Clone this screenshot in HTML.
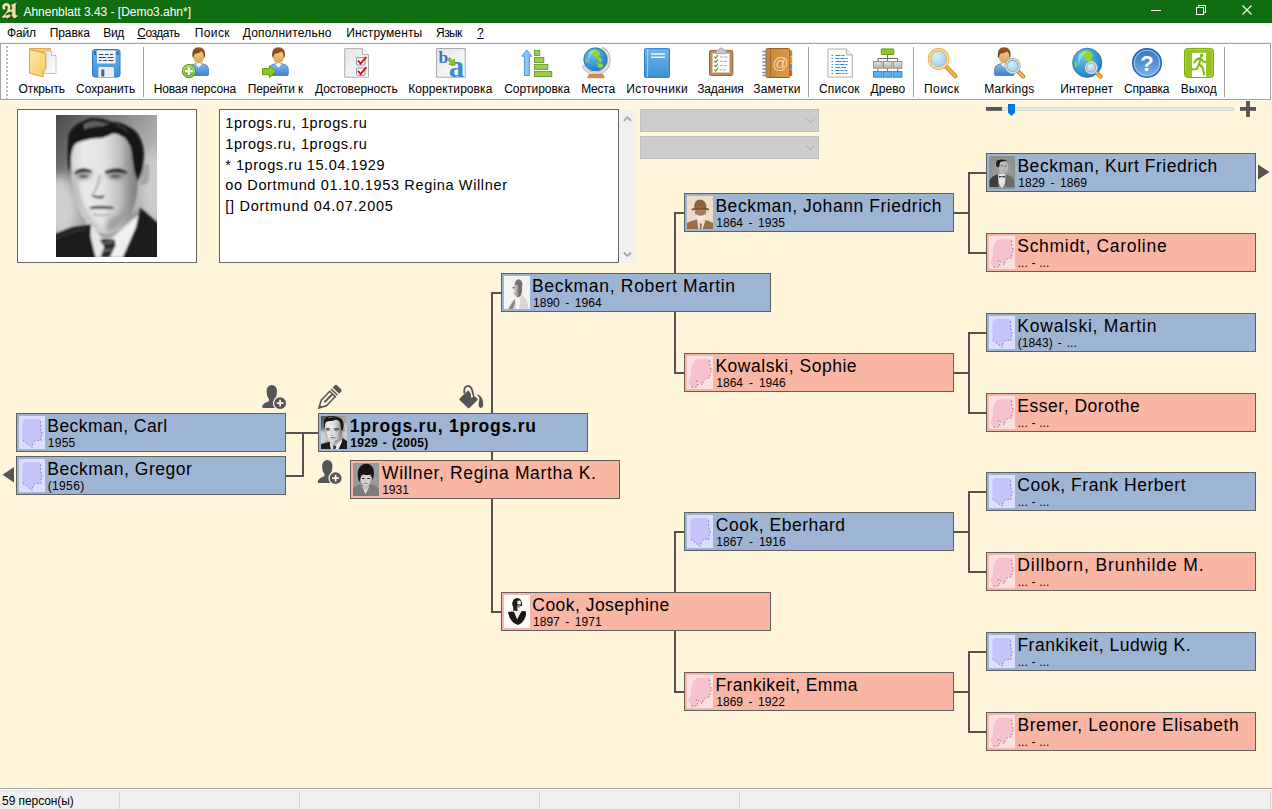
<!DOCTYPE html><html><head><meta charset="utf-8"><title>Ahnenblatt 3.43 - [Demo3.ahn*]</title><style>
html,body{margin:0;padding:0}
body{width:1272px;height:809px;overflow:hidden;background:#FFF5DA;position:relative;font-family:"Liberation Sans",sans-serif;color:#000}
.abs{position:absolute}
span.t{position:absolute;white-space:nowrap;line-height:16px}
#title{position:absolute;left:0;top:0;width:1272px;height:23px;background:#106E10}
#menu{position:absolute;left:0;top:23px;width:1272px;height:20px;background:#fff;border-bottom:1px solid #f2f2f2;box-sizing:border-box}
#tb{position:absolute;left:0;top:43px;width:1269px;height:55px;background:#fff;border:1px solid #a0a0a0}
#tbfill{position:absolute;left:0;top:43px;width:1272px;height:58px;background:#fff}
.sep{position:absolute;top:3px;width:1px;height:50px;background:#a0a0a0}
.box{position:absolute;width:268px;height:37px;border:1px solid #5f5f5f}
.m{background:#9DB5D2}
.f{background:#F9B6A4}
.box .th{position:absolute;left:2px;top:2px;width:26px;height:33px;overflow:hidden}
span.n{position:absolute;white-space:nowrap;line-height:20px}
span.d{position:absolute;white-space:nowrap;line-height:12px}
span.b{font-weight:bold}
#status{position:absolute;left:0;top:788px;width:1272px;height:21px;background:#f0f0f0;border-top:1px solid #a0a0a0;box-sizing:border-box;box-shadow:inset 0 1px 0 #fff,inset 0 2px 0 #dfdfdf}
#status i{position:absolute;top:3px;width:1px;height:17px;background:#d4d4d4}
</style></head><body>
<div id="title"><span class="t" style="left:23.45px;top:4px;font-size:12px;letter-spacing:-0.02px;color:#fff">Ahnenblatt 3.43 - [Demo3.ahn*]</span></div>
<div id="menu"><span class="t" style="left:7.1px;top:2px;font-size:12px;letter-spacing:-0.23px;">Файл</span><span class="t" style="left:49.75px;top:2px;font-size:12px;letter-spacing:-0.09px;">Правка</span><span class="t" style="left:103.3px;top:2px;font-size:12px;letter-spacing:-0.34px;">Вид</span><span class="t" style="left:137.2px;top:2px;font-size:12px;letter-spacing:-0.45px;"><u>С</u>оздать</span><span class="t" style="left:194.75px;top:2px;font-size:12px;letter-spacing:0.39px;">Поиск</span><span class="t" style="left:242.75px;top:2px;font-size:12px;letter-spacing:0.19px;">Дополнительно</span><span class="t" style="left:346.2px;top:2px;font-size:12px;letter-spacing:0.11px;">Инструменты</span><span class="t" style="left:436.1px;top:2px;font-size:12px;letter-spacing:-0.6px;">Язык</span><span class="t" style="left:477.1px;top:2px;font-size:12px;letter-spacing:0px;"><u>?</u></span></div>
<div id="tbfill"></div>
<div id="tb"><span class="t" style="left:17.55px;top:37px;font-size:12px;letter-spacing:-0.11px;">Открыть</span><span class="t" style="left:75.1px;top:37px;font-size:12px;letter-spacing:-0.06px;">Сохранить</span><span class="t" style="left:152.65px;top:37px;font-size:12px;letter-spacing:-0.13px;">Новая персона</span><span class="t" style="left:246.65px;top:37px;font-size:12px;letter-spacing:-0.06px;">Перейти к</span><span class="t" style="left:314px;top:37px;font-size:12px;letter-spacing:-0.07px;">Достоверность</span><span class="t" style="left:407.3px;top:37px;font-size:12px;letter-spacing:0.07px;">Корректировка</span><span class="t" style="left:503.2px;top:37px;font-size:12px;letter-spacing:0px;">Сортировка</span><span class="t" style="left:580.2px;top:37px;font-size:12px;letter-spacing:-0.23px;">Места</span><span class="t" style="left:625.2px;top:37px;font-size:12px;letter-spacing:0.45px;">Источники</span><span class="t" style="left:696.2px;top:37px;font-size:12px;letter-spacing:-0.15px;">Задания</span><span class="t" style="left:752.2px;top:37px;font-size:12px;letter-spacing:0.22px;">Заметки</span><span class="t" style="left:818.1px;top:37px;font-size:12px;letter-spacing:0.09px;">Список</span><span class="t" style="left:869.55px;top:37px;font-size:12px;letter-spacing:0.06px;">Древо</span><span class="t" style="left:923.1px;top:37px;font-size:12px;letter-spacing:0.39px;">Поиск</span><span class="t" style="left:983.3px;top:37px;font-size:12px;letter-spacing:0.19px;">Markings</span><span class="t" style="left:1059.3px;top:37px;font-size:12px;letter-spacing:0.06px;">Интернет</span><span class="t" style="left:1123.1px;top:37px;font-size:12px;letter-spacing:-0.3px;">Справка</span><span class="t" style="left:1179.65px;top:37px;font-size:12px;letter-spacing:0.06px;">Выход</span><div class="sep" style="left:142px"></div><div class="sep" style="left:807px"></div><div class="sep" style="left:912px"></div><div class="sep" style="left:1223px"></div></div>
<svg class="abs" style="left:0;top:0" width="1272" height="100" viewBox="0 0 1272 100">
<defs>
<linearGradient id="gBody" x1="0" y1="0" x2="0" y2="1"><stop offset="0" stop-color="#8cc0ee"/><stop offset="1" stop-color="#3b82cf"/></linearGradient>
<linearGradient id="gFace" x1="0" y1="0" x2="0" y2="1"><stop offset="0" stop-color="#f3d193"/><stop offset="1" stop-color="#d9a25a"/></linearGradient>
<linearGradient id="gHair" x1="0" y1="0" x2="0" y2="1"><stop offset="0" stop-color="#9a5a24"/><stop offset="1" stop-color="#6b3410"/></linearGradient>
<radialGradient id="gGlass" cx="0.4" cy="0.35" r="0.75"><stop offset="0" stop-color="#d8f0fb"/><stop offset="1" stop-color="#8cc8ec"/></radialGradient>
<radialGradient id="gSea" cx="0.35" cy="0.3" r="0.8"><stop offset="0" stop-color="#5fc0f0"/><stop offset="1" stop-color="#1c78c4"/></radialGradient>
<linearGradient id="gFolder" x1="0" y1="0" x2="1" y2="1"><stop offset="0" stop-color="#fce8a2"/><stop offset="1" stop-color="#f6cc62"/></linearGradient>
<linearGradient id="gPaper" x1="0" y1="0" x2="1" y2="1"><stop offset="0" stop-color="#e4e4e4"/><stop offset="1" stop-color="#ffffff"/></linearGradient>
<linearGradient id="gBlue" x1="0" y1="0" x2="0" y2="1"><stop offset="0" stop-color="#6fb4ea"/><stop offset="1" stop-color="#3f8fd6"/></linearGradient>
<linearGradient id="gGreenBtn" x1="0" y1="0" x2="0" y2="1"><stop offset="0" stop-color="#a6d84a"/><stop offset="1" stop-color="#5da016"/></linearGradient>
<linearGradient id="gHelp" x1="0" y1="0" x2="0" y2="1"><stop offset="0" stop-color="#2f74c4"/><stop offset="1" stop-color="#7db4e8"/></linearGradient>
<linearGradient id="gBrown" x1="0" y1="0" x2="1" y2="0"><stop offset="0" stop-color="#c98436"/><stop offset="1" stop-color="#dd9a4c"/></linearGradient>
<linearGradient id="gGrayBox" x1="0" y1="0" x2="0" y2="1"><stop offset="0" stop-color="#e2e2e2"/><stop offset="1" stop-color="#b4b4b4"/></linearGradient>
</defs>
<path d="M7 46V99" stroke="#b9b9b9" stroke-width="2" stroke-dasharray="2 2"/>
<g>
<path d="M29.5 48.5H50.5V52H29.5Z" fill="#f3cf74" stroke="#d9a13a" stroke-width="0.9"/>
<path d="M44 51H51.5L56 55.5V73.5H44Z" fill="url(#gPaper)" stroke="#b9b9b9" stroke-width="0.8"/>
<path d="M51.5 51V55.5H56" fill="#fff" stroke="#b0b0b0" stroke-width="0.8"/>
<path d="M29.5 49.5L45.8 53.3V69L43.2 71.2V76.8L29.5 73.2Z" fill="url(#gFolder)" stroke="#dba23c" stroke-width="1"/>
</g>
<g>
<rect x="92.5" y="49.5" width="27.5" height="27.5" rx="2.5" fill="url(#gBlue)" stroke="#2c7cc4" stroke-width="1"/>
<rect x="94" y="51" width="2" height="4" fill="#2d6fae"/><rect x="116.5" y="51" width="2" height="4" fill="#2d6fae"/>
<rect x="97" y="50.5" width="18.5" height="13" fill="#eef3f8"/>
<path d="M99 54.5h4.5m1.5 0h3.5m1.5 0h3M99 57.5h7m1.5 0h6M99 60.5h2.5m1.5 0h4m1.5 0h5" stroke="#3b4652" stroke-width="1"/>
<path d="M98.3 77V68.5Q98.3 67 99.8 67H112.5Q114 67 114 68.5V77Z" fill="#e9eef4"/>
<rect x="101.3" y="69.5" width="3" height="7" fill="#5b5f64"/>
</g>
<g transform="translate(198.7,47.3)">
<path d="M-9.600 27.300V22Q-9.600 18 -4 16.600L0 15.500L4 16.600Q9.800 18 9.800 22V27.300Q9.800 28.200 8.800 28.200H-8.600Q-9.600 28.200 -9.600 27.300Z" fill="url(#gBody)" stroke="#3a7cc4" stroke-width="0.8"/>
<path d="M-3.2 16.6L0 20.5L3.2 16.6L0 15Z" fill="#f4f8fc"/>
<ellipse cx="0" cy="9" rx="5.6" ry="7" fill="url(#gFace)"/>
<path d="M-6.4 8.5Q-7 0 0 0Q7 0 6.4 8.5Q6 10 5.2 11Q5.4 6 3 4.2Q0 6.2 -3.5 6.4Q-5 7 -5.2 11Q-6 10 -6.4 8.5Z" fill="url(#gHair)"/>
</g>
<circle cx="188.9" cy="71.1" r="6.6" fill="url(#gGreenBtn)" stroke="#4c8a12" stroke-width="1"/>
<circle cx="188.9" cy="71.1" r="5.6" fill="none" stroke="#c4e880" stroke-width="0.7"/>
<path d="M188.9 67.2V75M185 71.1H192.8" stroke="#fff" stroke-width="2.3"/>
<g transform="translate(278.5,47.3)">
<path d="M-9.600 27.300V22Q-9.600 18 -4 16.600L0 15.500L4 16.600Q9.800 18 9.800 22V27.300Q9.800 28.200 8.800 28.200H-8.600Q-9.600 28.200 -9.600 27.300Z" fill="url(#gBody)" stroke="#3a7cc4" stroke-width="0.8"/>
<path d="M-3.2 16.6L0 20.5L3.2 16.6L0 15Z" fill="#f4f8fc"/>
<ellipse cx="0" cy="9" rx="5.6" ry="7" fill="url(#gFace)"/>
<path d="M-6.4 8.5Q-7 0 0 0Q7 0 6.4 8.5Q6 10 5.2 11Q5.4 6 3 4.2Q0 6.2 -3.5 6.4Q-5 7 -5.2 11Q-6 10 -6.4 8.5Z" fill="url(#gHair)"/>
</g>
<path d="M262.5 68.5H269.5V65.8L275.8 71.6L269.5 77.4V74.7H262.5Z" fill="#8cc820" stroke="#5a9610" stroke-width="0.9" stroke-linejoin="round"/>
<g>
<path d="M344.7 48.6H362.5L368.5 54.6V77.2H344.7Z" fill="url(#gPaper)" stroke="#a6a6a6" stroke-width="0.9"/>
<path d="M362.5 48.6V54.6H368.5" fill="#fff" stroke="#a6a6a6" stroke-width="0.9"/>
<rect x="356.6" y="57.6" width="8.4" height="7.4" rx="1" fill="#fff" stroke="#6d7fa8" stroke-width="0.9"/>
<rect x="356.6" y="68" width="8.4" height="7.4" rx="1" fill="#fff" stroke="#6d7fa8" stroke-width="0.9"/>
<path d="M358 60.5L360.6 63.6L366.4 56.8" fill="none" stroke="#d01818" stroke-width="1.9"/>
<path d="M358 70.9L360.6 74L366.4 67.2" fill="none" stroke="#d01818" stroke-width="1.9"/>
</g>
<g>
<rect x="436.6" y="48.6" width="28.6" height="28.6" fill="url(#gPaper)" stroke="#a0a0a0" stroke-width="0.9"/>
<text x="438.6" y="63.2" font-family="Liberation Serif,serif" font-weight="bold" font-size="17.5" fill="#3a78bf">b</text>
<text x="448.8" y="76.6" font-family="Liberation Serif,serif" font-weight="bold" font-size="31" fill="#3b8ad3">a</text>
<path d="M447.6 59.4L449.6 57.400L452.8 60.600L454.400 59L455.200 65.200L449 64.400L450.600 62.800Z" fill="#8cc820" stroke="#5a9610" stroke-width="0.7" stroke-linejoin="round"/>
</g>
<g>
<path d="M524.4 75.5V56.2H521.9L526.8 49.9L531.7 56.2H529.3V75.5Z" fill="#8ec3f0" stroke="#3f8fd6" stroke-width="0.9" stroke-linejoin="round"/>
<g fill="#9ccc50" stroke="#5c9a26" stroke-width="0.9"><rect x="534.4" y="50.4" width="5.4" height="5"/><rect x="534.4" y="57.4" width="9.4" height="5"/><rect x="534.4" y="64.4" width="13.4" height="5"/><rect x="534.4" y="71.6" width="17.4" height="5"/></g>
</g>
<path d="M603.2 48.9A13.5 13.5 0 1 1 583.8 66.75" fill="none" stroke="#a8a8a8" stroke-width="3.2" stroke-linecap="round"/>
<path d="M603.2 48.9A13.5 13.5 0 1 1 583.8 66.75" fill="none" stroke="#e4e4e4" stroke-width="1.8" stroke-linecap="round"/>
<circle cx="595.4" cy="59.4" r="11.6" fill="url(#gSea)" stroke="#1f6fb0" stroke-width="0.8"/>
<g transform="translate(595.4,59.4) scale(0.9666666666666667)">
<path d="M-4 -9.5Q0 -11 3 -9L5 -6L3.5 -3L6 -1L7.5 2L5 3.5L3 2L1.5 -1L-1 -2L-3 -5L-6 -6Z" fill="#8fd43a"/>
<path d="M1 3L5 4.5L7.5 4L8 7L5 9.5L2.5 8L2 5.5Z" fill="#8fd43a"/>
<path d="M-10.5 0L-8.5 -1L-8 2L-9.5 4Z" fill="#8fd43a"/>
<path d="M-6.5 -7.5Q-3 -10 1 -10Q-3 -8 -5 -4Q-7 -1 -6.5 3Q-8.5 -2 -6.5 -7.5Z" fill="#fff" opacity="0.35"/>
</g>
<path d="M592.5 71.5H599L600 74.6H591.5Z" fill="#d8d8d8"/><path d="M589 74.4H603L604.3 77.8H587.7Z" fill="#d88858" stroke="#b86838" stroke-width="0.6"/>
<g>
<rect x="644.5" y="48.6" width="25" height="28.8" rx="1" fill="url(#gBlue)" stroke="#2f7fc6" stroke-width="1"/>
<path d="M647.6 49V77" stroke="#9fd0f6" stroke-width="1"/>
<path d="M651 53.9H665M651 57.2H665" stroke="#eaf4fc" stroke-width="1.5"/>
</g>
<g>
<rect x="709.5" y="50.4" width="23.3" height="25" rx="1.5" fill="#c08a58" stroke="#96643a" stroke-width="1"/>
<rect x="712.6" y="53.2" width="17" height="19.4" fill="#fbfbfb" stroke="#d8c8b0" stroke-width="0.5"/>
<path d="M716 53.6V51Q716 50 717.5 50H719Q719.3 47.9 721.2 47.9Q723.1 47.9 723.4 50H725Q726.4 50 726.4 51V53.6Z" fill="#c4c8cc" stroke="#8c9096" stroke-width="0.7"/>
<g fill="none" stroke="#4aa018" stroke-width="1.1"><path d="M714.4 56.6l1.3 1.5 2.2-3"/><path d="M714.4 60.9l1.3 1.5 2.2-3"/><path d="M714.4 65.2l1.3 1.5 2.2-3"/><path d="M714.4 69.5l1.3 1.5 2.2-3"/></g>
<path d="M720 57h3.5m1 0h3M720 61.3h2.5m1 0h3.5M720 65.6h3m1 0h2.5M720 69.9h2m1 0h3" stroke="#a0a0a0" stroke-width="0.9"/>
</g>
<g>
<rect x="789" y="50.5" width="3.2" height="6" fill="#7cb342"/><rect x="789" y="57" width="3.2" height="6" fill="#f0a030"/><rect x="789" y="63.5" width="3.2" height="6" fill="#5a9be0"/><rect x="789" y="70" width="3.2" height="6" fill="#e0603a"/>
<rect x="766" y="48.5" width="23.8" height="29" rx="1.5" fill="url(#gBrown)" stroke="#9a5f1e" stroke-width="1"/>
<path d="M770.6 49V77" stroke="#a4661f" stroke-width="1"/>
<path d="M762.8 51.5h5.4M762.8 55h5.4M762.8 58.5h5.4M762.8 62h5.4M762.8 65.500h5.4M762.8 69h5.4M762.8 72.500h5.4M762.8 75.5h5.4" stroke="#8a8a8a" stroke-width="1.3" stroke-linecap="round"/>
<text x="780.3" y="68.8" text-anchor="middle" font-family="Liberation Sans,sans-serif" font-size="16" fill="#f6d9ae">@</text>
</g>
<g>
<path d="M827.9 49H846.4L852.3 54.9V77.1H827.9Z" fill="#fbfbfb" stroke="#a8a8a8" stroke-width="0.9"/>
<path d="M846.4 49V54.900H852.3" fill="#eee" stroke="#a8a8a8" stroke-width="0.9"/>
<g stroke="#2f86d6" stroke-width="1.1"><path d="M831.5 55.5h1.5m2.500 0h5m1 0h3"/><path d="M831.5 58.500h1.500m2.500 0h4m1 0h4m1 0h2"/><path d="M831.5 61.5h1.5m2.5 0h6m1 0h3m1 0h1.500"/><path d="M831.5 64.5h1.500m2.500 0h3m1 0h5m1 0h2"/><path d="M831.5 67.500h1.5m2.500 0h5m1 0h4.500"/><path d="M831.5 70.500h1.500m2.500 0h4m1 0h3m1 0h2.500"/><path d="M831.5 73.500h1.500m2.500 0h6m1 0h2m1 0h2"/></g>
</g>
<g>
<path d="M887.6 54.500V58.500M877.9 61.200V58.500H897.600V61.200M887.600 58.500V61.200M877.9 68.400V71.100M887.6 68.400V71.100M897.6 68.400V71.100" fill="none" stroke="#6a6a6a" stroke-width="1"/>
<rect x="881.3" y="48.900" width="12.600" height="5.600" rx="0.8" fill="#8cc820" stroke="#5a9610" stroke-width="0.9"/>
<g fill="url(#gGrayBox)" stroke="#8a8a8a" stroke-width="0.9"><rect x="873.5" y="61.500" width="8.600" height="6.700"/><rect x="883.4" y="61.500" width="8.600" height="6.700"/><rect x="893.3" y="61.500" width="8.600" height="6.700"/></g>
<g fill="#58b0f0" stroke="#2a80c8" stroke-width="0.9"><rect x="873.5" y="71.500" width="8.600" height="5.700"/><rect x="883.4" y="71.500" width="8.600" height="5.700"/><rect x="893.300" y="71.500" width="8.600" height="5.700"/></g>
</g>
<path d="M945.45 65.91L955.3 76.0" stroke="#c77d1c" stroke-width="4.2" stroke-linecap="round"/>
<path d="M945.45 65.91L955.3 76.0" stroke="#f6b14a" stroke-width="2.6" stroke-linecap="round"/>
<circle cx="938.6" cy="58.9" r="9.3" fill="url(#gGlass)" stroke="#dda044" stroke-width="3.1"/>
<circle cx="938.6" cy="58.9" r="9.3" fill="none" stroke="#f7dfa6" stroke-width="1.8000000000000003"/>
<g transform="translate(1004.2,47.3)">
<path d="M-9.600 27.300V22Q-9.600 18 -4 16.600L0 15.500L4 16.600Q9.800 18 9.800 22V27.300Q9.800 28.200 8.800 28.200H-8.600Q-9.600 28.200 -9.600 27.300Z" fill="url(#gBody)" stroke="#3a7cc4" stroke-width="0.8"/>
<path d="M-3.2 16.6L0 20.5L3.2 16.6L0 15Z" fill="#f4f8fc"/>
<ellipse cx="0" cy="9" rx="5.6" ry="7" fill="url(#gFace)"/>
<path d="M-6.4 8.5Q-7 0 0 0Q7 0 6.4 8.5Q6 10 5.2 11Q5.4 6 3 4.2Q0 6.2 -3.5 6.4Q-5 7 -5.2 11Q-6 10 -6.4 8.5Z" fill="url(#gHair)"/>
</g>
<path d="M1017.69 71.09L1023.2 76.6" stroke="#c77d1c" stroke-width="4.2" stroke-linecap="round"/>
<path d="M1017.69 71.09L1023.2 76.6" stroke="#f6b14a" stroke-width="2.6" stroke-linecap="round"/>
<circle cx="1012.6" cy="66.0" r="6.7" fill="url(#gGlass)" stroke="#8c96a8" stroke-width="2.8"/>
<circle cx="1012.6" cy="66.0" r="6.7" fill="none" stroke="#d8dce4" stroke-width="1.5"/>
<circle cx="1087.2" cy="62.8" r="14.6" fill="url(#gSea)" stroke="#1f6fb0" stroke-width="0.8"/>
<g transform="translate(1087.2,62.8) scale(1.2166666666666666)">
<path d="M-4 -9.5Q0 -11 3 -9L5 -6L3.5 -3L6 -1L7.5 2L5 3.5L3 2L1.5 -1L-1 -2L-3 -5L-6 -6Z" fill="#8fd43a"/>
<path d="M1 3L5 4.5L7.5 4L8 7L5 9.5L2.5 8L2 5.5Z" fill="#8fd43a"/>
<path d="M-10.5 0L-8.5 -1L-8 2L-9.5 4Z" fill="#8fd43a"/>
<path d="M-6.5 -7.5Q-3 -10 1 -10Q-3 -8 -5 -4Q-7 -1 -6.5 3Q-8.5 -2 -6.5 -7.5Z" fill="#fff" opacity="0.35"/>
</g>
<path d="M1095.61 71.82L1100.6 76.6" stroke="#c77d1c" stroke-width="4.2" stroke-linecap="round"/>
<path d="M1095.61 71.82L1100.6 76.6" stroke="#f6b14a" stroke-width="2.6" stroke-linecap="round"/>
<circle cx="1091.2" cy="67.6" r="5.6" fill="url(#gGlass)" stroke="#8c96a8" stroke-width="2.7"/>
<circle cx="1091.2" cy="67.6" r="5.6" fill="none" stroke="#d8dce4" stroke-width="1.4"/>
<g>
<circle cx="1147" cy="62.900" r="14.300" fill="url(#gHelp)" stroke="#2462ae" stroke-width="1.4"/>
<circle cx="1147" cy="62.900" r="12.700" fill="none" stroke="#a8d0f4" stroke-width="0.9"/>
<text x="1147" y="71.2" text-anchor="middle" font-family="Liberation Sans,sans-serif" font-weight="bold" font-size="22" fill="#fff">?</text>
</g>
<g>
<rect x="1184.5" y="48.400" width="29" height="29" rx="3" fill="#98c41c" stroke="#7aa810" stroke-width="1"/><rect x="1185.6" y="49.500" width="26.800" height="26.800" rx="2.200" fill="none" stroke="#b4dc48" stroke-width="0.800"/>
<path d="M1192 77V52.800H1206V77Z" fill="#fff"/>
<path d="M1206 56V77H1203V59Z" fill="#98c41c" opacity="0.0"/>
<circle cx="1201.5" cy="55.400" r="1.800" fill="#86b814"/>
<path d="M1196.500 59.300L1200.500 58.100L1203.200 61.500L1205.600 61.800M1200.500 58.100L1199.300 63.800L1202.600 67.700L1204.300 74.500M1199.300 63.800L1196.700 69L1191 69.500M1196.500 59.300L1194.300 62.500" fill="none" stroke="#86b814" stroke-width="2.100" stroke-linecap="round" stroke-linejoin="round"/>
<path d="M1184.800 71L1192 69.800V77.200H1187Q1184.800 77.200 1184.800 75Z" fill="#98c41c"/>
</g>
</svg>
<div class="abs" style="left:17px;top:109px;width:178px;height:152px;background:#fff;border:1px solid #646464"></div>
<svg class="abs" style="left:56px;top:115px" width="101" height="142" viewBox="0 0 101 142"><defs>
<filter id="p0b1" x="-20%" y="-20%" width="140%" height="140%"><feGaussianBlur stdDeviation="0.9"/></filter>
<filter id="p0b2" x="-30%" y="-30%" width="160%" height="160%"><feGaussianBlur stdDeviation="2.4"/></filter>
<filter id="p0b3" x="-40%" y="-40%" width="180%" height="180%"><feGaussianBlur stdDeviation="6"/></filter>
<linearGradient id="p0bg" x1="0" y1="0" x2="1" y2="0.9"><stop offset="0" stop-color="#4a4a4a"/><stop offset="0.3" stop-color="#7e7e7e"/><stop offset="0.65" stop-color="#b4b4b4"/><stop offset="1" stop-color="#a8a8a8"/></linearGradient>
<linearGradient id="p0fc" x1="0" y1="0" x2="1" y2="0"><stop offset="0" stop-color="#d6d6d6"/><stop offset="0.2" stop-color="#eaeaea"/><stop offset="0.5" stop-color="#e2e2e2"/><stop offset="0.72" stop-color="#c0c0c0"/><stop offset="0.88" stop-color="#929292"/><stop offset="1" stop-color="#787878"/></linearGradient>
<clipPath id="p0c"><rect width="101" height="142"/></clipPath>
</defs>
<g clip-path="url(#p0c)">
<rect width="101" height="142" fill="url(#p0bg)"/>
<ellipse cx="4" cy="92" rx="20" ry="32" fill="#cfcfcf" filter="url(#p0b3)"/>
<ellipse cx="98" cy="72" rx="13" ry="36" fill="#cdcdcd" filter="url(#p0b3)"/>
<g filter="url(#p0b1)">
<path d="M83.100 49.200Q90 47 93.400 51.100Q94.500 58 92.500 66.200Q89 71 84 69.900Z" fill="#a6a6a6"/>
<path d="M40 104L38 122L80 118L86 92L74 100Z" fill="#9c9c9c"/>
<path d="M15.400 50Q14 36 20 28L46 21L58 17L72 24Q80 36 82.100 56L82.100 66.200L80.300 83.100L75 100Q70 110 64 114.500Q56 119.500 49 119Q42 118 37 114Q30 108 25.500 100Q20 90 17.500 80L15.600 66Z" fill="url(#p0fc)"/>
<path d="M15 66Q18 88 30 106Q40 117 50 119.500Q40 112 31 98Q23 84 20 64Z" fill="#8c8c8c" opacity="0.55" filter="url(#p0b2)"/>
<ellipse cx="27" cy="60" rx="8.500" ry="4.200" fill="#6e6e6e" opacity="0.7" filter="url(#p0b2)"/>
<ellipse cx="60" cy="60" rx="9.500" ry="4.200" fill="#6e6e6e" opacity="0.7" filter="url(#p0b2)"/>
<path d="M52 104Q64 102 72 90Q70 104 60 113Q54 118 48 118Z" fill="#808080" opacity="0.6" filter="url(#p0b2)"/>
<path d="M12.600 19.200Q18 9 27.600 6Q33 2.500 38.900 3.200Q47 3 55.800 7Q66 7 72.700 11.700Q81 15 84 22.900Q88.500 31 87.800 41.700Q87.500 50 85.900 56.800L82.100 66L81.200 64.300L78.400 56.800L76.500 43.600Q76 37 74.600 32.300Q72 26 69 22.900Q63 19 57.700 18.200Q52 21 46.400 22.900Q36 23 27.600 24.800Q21 27 17.300 30.500Q15 37 14.500 43.600L14.500 52L13.500 56.800Q11.500 50 11.700 41.700Q11.500 29 12.600 19.200Z" fill="#161616"/>
<path d="M28 9Q36 4.500 44 7Q50 9 54 8Q48 12 40 11.500Q33 12 28 15Z" fill="#7a7a7a" opacity="0.75"/>
<path d="M60 10Q68 12 72 18" stroke="#4a4a4a" stroke-width="1.200" fill="none"/>
<path d="M18.500 57Q24 52 30 53.500L36 55.500L35.500 58Q27 55.500 18.500 59.500Z" fill="#262626"/>
<path d="M49 56Q58 52 66 54L71 56.500L70.500 59Q60 55.500 49.500 59Z" fill="#262626"/>
<path d="M22 61.500Q27 59.500 33 61.500Q27 63.800 22 61.500Z" fill="#3a3a3a"/>
<path d="M53 61.500Q59 59.300 65.500 61.500Q59 64 53 61.500Z" fill="#3a3a3a"/>
<path d="M44 60Q42 72 37.500 78" stroke="#b0b0b0" stroke-width="2.200" fill="none"/>
<path d="M35.500 79Q40 82.500 48.500 80L47.500 83Q41 84.500 36 81.500Z" fill="#4c4c4c"/>
<path d="M33.500 92Q45 89.500 58 92L57 94.200Q45 93.500 34.500 94.200Z" fill="#505050"/>
<path d="M37 99Q45 101.500 54 99" stroke="#a8a8a8" stroke-width="1.600" fill="none"/>
<path d="M35.200 112L50 128L86 97L92 142H34Z" fill="#f0f0f0"/>
<path d="M35.200 110L34.200 142H45L50 128Z" fill="#e6e6e6"/>
<path d="M50 128L70 110L76 104" stroke="#c4c4c4" stroke-width="1.200" fill="none"/>
<path d="M43.600 124.400L58.600 124.400L59.600 130L54 142H44.500L48.300 132Z" fill="#2a2a2a"/>
<path d="M47 128.500L57 127M46.500 136L55.500 134.500" stroke="#9a9a9a" stroke-width="1.100"/>
<path d="M-2 119.500L16.400 112.200L35.200 109.400L34.200 120L40 144H-2Z" fill="#1a1a1a"/>
<path d="M84 92.500L103 109V144H66L80 112Z" fill="#1a1a1a"/>
<path d="M0 124Q14 116 30 114" stroke="#3a3a3a" stroke-width="1.500" fill="none"/>
</g>
</g></svg>
<div class="abs" style="left:219px;top:109px;width:398px;height:152px;background:#fff;border:1px solid #646464"></div>
<span class="t" style="left:225.3px;top:114.4px;font-size:14.5px;letter-spacing:0.57px;line-height:18px">1progs.ru, 1progs.ru</span>
<span class="t" style="left:225.3px;top:135px;font-size:14.5px;letter-spacing:0.57px;line-height:18px">1progs.ru, 1progs.ru</span>
<span class="t" style="left:225.2px;top:155.6px;font-size:14.5px;letter-spacing:0.56px;line-height:18px">* 1progs.ru 15.04.1929</span>
<span class="t" style="left:225.2px;top:176.2px;font-size:14.5px;letter-spacing:0.64px;line-height:18px">oo Dortmund 01.10.1953 Regina Willner</span>
<span class="t" style="left:225.3px;top:196.8px;font-size:14.5px;letter-spacing:0.72px;line-height:18px">[] Dortmund 04.07.2005</span>
<div class="abs" style="left:620px;top:110px;width:16px;height:153px;background:#f0f0f0"></div>
<div class="abs" style="left:640px;top:109px;width:177px;height:21px;background:#ccc;border:1px solid #bfbfbf"></div>
<div class="abs" style="left:640px;top:136px;width:177px;height:21px;background:#ccc;border:1px solid #bfbfbf"></div>
<svg class="abs" style="left:0;top:0" width="1272" height="809" viewBox="0 0 1272 809"><g stroke="#575152" stroke-width="2" fill="none" shape-rendering="crispEdges"><path d="M286 433L318 433"/><path d="M286 476L303 476"/><path d="M303 433L303 477"/><path d="M492 292L492 613"/><path d="M492 293L501 293"/><path d="M492 612L501 612"/><path d="M675 212L675 374"/><path d="M675 213L684 213"/><path d="M675 373L684 373"/><path d="M675 531L675 693"/><path d="M675 532L684 532"/><path d="M675 692L684 692"/><path d="M954 213L969 213"/><path d="M969 172L969 254"/><path d="M969 173L986 173"/><path d="M969 253L986 253"/><path d="M954 373L969 373"/><path d="M969 332L969 414"/><path d="M969 333L986 333"/><path d="M969 413L986 413"/><path d="M954 532L969 532"/><path d="M969 491L969 573"/><path d="M969 492L986 492"/><path d="M969 572L986 572"/><path d="M954 692L969 692"/><path d="M969 651L969 733"/><path d="M969 652L986 652"/><path d="M969 732L986 732"/></g><path d="M1258 164.5L1258 179.5L1269.5 172Z" fill="#555555"/><path d="M14 467L14 482.5L2.5 474.75Z" fill="#555555"/><rect x="986" y="107" width="16" height="3.8" fill="#555555"/><rect x="1240" y="107" width="16" height="3.8" fill="#555555"/><rect x="1246.1" y="101" width="3.8" height="16" fill="#555555"/><rect x="1002.5" y="107.5" width="231" height="3" fill="#e7e7e7" stroke="#d6d6d6" stroke-width="1"/><path d="M1008 104H1015V112.4L1011.5 116L1008 112.4Z" fill="#0078d7"/><g transform="translate(0,0)">
<path d="M262.2 407.2Q262 404.5 264.5 403.2L268.6 401.2Q269.5 400.5 269 399.3Q266.6 396.500 266.600 391.400Q266.800 385 271.800 384.900Q276.800 385 277 391.400Q277 396.500 274.600 399.300Q274.1 400.5 275 401.2L279 403.2Q281 404.2 281.2 407.2Q281.2 408 280.2 408H263.2Q262.2 408 262.2 407.2Z" fill="#555555"/>
<circle cx="280.1" cy="403.2" r="7.1" fill="#FFF5DA"/>
<circle cx="280.1" cy="403.2" r="5.9" fill="#555555"/>
<path d="M280.1 399.8V406.6M276.7 403.2H283.5" stroke="#FFF5DA" stroke-width="1.7"/>
</g><g transform="translate(55.5,75)">
<path d="M262.2 407.2Q262 404.5 264.5 403.2L268.6 401.2Q269.5 400.5 269 399.3Q266.6 396.500 266.600 391.400Q266.800 385 271.800 384.900Q276.800 385 277 391.400Q277 396.500 274.600 399.300Q274.1 400.5 275 401.2L279 403.2Q281 404.2 281.2 407.2Q281.2 408 280.2 408H263.2Q262.2 408 262.2 407.2Z" fill="#555555"/>
<circle cx="280.1" cy="403.2" r="7.1" fill="#FFF5DA"/>
<circle cx="280.1" cy="403.2" r="5.9" fill="#555555"/>
<path d="M280.1 399.8V406.6M276.7 403.2H283.5" stroke="#FFF5DA" stroke-width="1.7"/>
</g><g transform="translate(318.5,408.5) rotate(-46)">
<path d="M0.6 0L7.8 -3.8H20.2V3.8H7.8Z" fill="none" stroke="#555555" stroke-width="1.5" stroke-linejoin="miter"/>
<path d="M0 0L3.6 -1.9V1.9Z" fill="#555555"/>
<path d="M8.5 0H19.5" stroke="#555555" stroke-width="1.9"/>
<rect x="22" y="-4.5" width="1.5" height="9" fill="#555555"/>
<path d="M25 -4.5H27.8Q29.5 -4.5 29.5 -2.8V2.8Q29.5 4.5 27.8 4.5H25Z" fill="#555555"/>
</g><g>
<path d="M464.3 393.5Q463.3 386 468.3 385.8Q472.3 386 473.3 396" fill="none" stroke="#555555" stroke-width="1.800"/>
<path d="M460.3 399.300L468.400 391.500L476.700 399.500L468.600 407.400Z" fill="#555555" stroke="#555555" stroke-width="2" stroke-linejoin="round"/>
<path d="M469.6 390.8Q471.6 393 472 396.3" fill="none" stroke="#FFF5DA" stroke-width="1.3"/>
<circle cx="471.9" cy="396.4" r="1.15" fill="#FFF5DA"/>
<path d="M476.6 394.3Q482.8 395.5 483.2 403.5Q483.3 407.9 480.8 407.9Q478.2 407.8 478.6 403.5Q479.6 399.5 479.300 397.5Z" fill="#555555"/>
</g><path d="M623.8 120.8L627.4 117.2L631 120.8" fill="none" stroke="#a3a3a3" stroke-width="1.8"/><path d="M623.8 252.500L627.4 256.1L631 252.5" fill="none" stroke="#a3a3a3" stroke-width="1.8"/><path d="M806.3 118.8L810.3 122.8L814.3 118.8" fill="none" stroke="#a6a6a6" stroke-width="1"/><path d="M806.3 145.800L810.3 149.8L814.3 145.8" fill="none" stroke="#a6a6a6" stroke-width="1"/><path d="M1151 10.5H1161" stroke="#fff" stroke-width="1"/><path d="M1198.5 7.5V5.5H1205.5V12.5H1203.5" fill="none" stroke="#fff" stroke-width="1"/><rect x="1196.5" y="7.5" width="7" height="7" fill="none" stroke="#fff" stroke-width="1"/><path d="M1242.5 5.5L1251.5 14.5M1251.5 5.5L1242.5 14.5" stroke="#fff" stroke-width="1.1"/><g fill="#0b3d0b" stroke="#0b3d0b" stroke-width="0.6" transform="translate(0.8,0.7)"><path d="M2.6 7.6Q2.2 3.600 6 3.200Q9.600 3 10.200 6.600Q10.600 10.500 7 13.200L4.600 15.200L6.800 15.600L9.300 14.500L10.400 16.200L7.600 18.200L5.200 17L3.300 18L2.400 16.800L5 14.200Q8.300 11.200 8 7.400Q7.700 5.200 6 5.400Q4.500 5.800 5 7.600Q5.800 9.400 4.400 9.800Q2.900 9.600 2.600 7.600Z"/><path d="M11.400 5L16.400 3L15.300 5.400V14.800L17.800 15.900L14.600 18.200L11.800 15.800L12.300 14.900V6.600Z"/><path d="M7.800 10.600L12.500 9.600V11.200L7 12.400Z"/></g><g fill="#f8dfae" stroke="#f8dfae" stroke-width="0.55" stroke-linejoin="round"><path d="M2.6 7.6Q2.2 3.600 6 3.200Q9.600 3 10.200 6.600Q10.600 10.500 7 13.200L4.600 15.200L6.800 15.600L9.300 14.500L10.400 16.200L7.600 18.200L5.200 17L3.300 18L2.400 16.800L5 14.200Q8.300 11.200 8 7.400Q7.700 5.200 6 5.400Q4.500 5.800 5 7.600Q5.800 9.400 4.400 9.800Q2.900 9.600 2.600 7.600Z"/><path d="M11.400 5L16.400 3L15.300 5.400V14.800L17.800 15.900L14.600 18.200L11.800 15.800L12.300 14.900V6.600Z"/><path d="M7.800 10.600L12.500 9.600V11.200L7 12.400Z"/></g></svg>
<div class="box m" style="left:16px;top:413px"><div class="th"><svg width="26" height="33" viewBox="0 0 26 33"><rect width="26" height="33" fill="#DDDDFF"/><path d="M7 2.900H20Q21.300 3.600 21.500 5.500L22 14.300L23.400 16.900L22 21V24.400H16.900L14.300 26.200L13.200 31.400L2.900 23.600L3.800 21.500L3.400 20V6.500Q4.300 3.400 7 2.900Z" fill="#C4C4FB"/><path d="M21.500 5.500L22 14.300L23.400 16.900L22 21V24.400H16.900L14.300 26.200L13.200 31.400L2.900 23.600" fill="none" stroke="#5c587c" stroke-width="0.7" stroke-dasharray="1.600 2"/></svg></div><span class="n" style="left:30.3px;top:2px;font-size:17.5px;letter-spacing:0.43px;">Beckman, Carl</span><span class="d" style="left:30.7px;top:23px;font-size:12px;letter-spacing:0.3px;word-spacing:2.5px;">1955</span></div>
<div class="box m" style="left:16px;top:456px"><div class="th"><svg width="26" height="33" viewBox="0 0 26 33"><rect width="26" height="33" fill="#DDDDFF"/><path d="M7 2.900H20Q21.300 3.600 21.500 5.500L22 14.300L23.400 16.900L22 21V24.400H16.900L14.300 26.200L13.200 31.400L2.900 23.600L3.800 21.500L3.400 20V6.500Q4.300 3.400 7 2.900Z" fill="#C4C4FB"/><path d="M21.500 5.500L22 14.300L23.400 16.900L22 21V24.400H16.900L14.300 26.200L13.200 31.400L2.900 23.600" fill="none" stroke="#5c587c" stroke-width="0.7" stroke-dasharray="1.600 2"/></svg></div><span class="n" style="left:30.3px;top:2px;font-size:17.5px;letter-spacing:0.53px;">Beckman, Gregor</span><span class="d" style="left:30.7px;top:23px;font-size:12px;letter-spacing:0.36px;word-spacing:2.5px;">(1956)</span></div>
<div class="box m" style="left:318px;top:413px"><div class="th"><svg width="26" height="33" viewBox="0 4 101 134" preserveAspectRatio="none"><defs>
<filter id="t0b1" x="-20%" y="-20%" width="140%" height="140%"><feGaussianBlur stdDeviation="0.9"/></filter>
<filter id="t0b2" x="-30%" y="-30%" width="160%" height="160%"><feGaussianBlur stdDeviation="2.4"/></filter>
<filter id="t0b3" x="-40%" y="-40%" width="180%" height="180%"><feGaussianBlur stdDeviation="6"/></filter>
<linearGradient id="t0bg" x1="0" y1="0" x2="1" y2="0.9"><stop offset="0" stop-color="#4a4a4a"/><stop offset="0.3" stop-color="#7e7e7e"/><stop offset="0.65" stop-color="#b4b4b4"/><stop offset="1" stop-color="#a8a8a8"/></linearGradient>
<linearGradient id="t0fc" x1="0" y1="0" x2="1" y2="0"><stop offset="0" stop-color="#d6d6d6"/><stop offset="0.2" stop-color="#eaeaea"/><stop offset="0.5" stop-color="#e2e2e2"/><stop offset="0.72" stop-color="#c0c0c0"/><stop offset="0.88" stop-color="#929292"/><stop offset="1" stop-color="#787878"/></linearGradient>
<clipPath id="t0c"><rect width="101" height="142"/></clipPath>
</defs>
<g clip-path="url(#t0c)">
<rect width="101" height="142" fill="url(#t0bg)"/>
<ellipse cx="4" cy="92" rx="20" ry="32" fill="#cfcfcf" filter="url(#t0b3)"/>
<ellipse cx="98" cy="72" rx="13" ry="36" fill="#cdcdcd" filter="url(#t0b3)"/>
<g filter="url(#t0b1)">
<path d="M83.100 49.200Q90 47 93.400 51.100Q94.500 58 92.500 66.200Q89 71 84 69.900Z" fill="#a6a6a6"/>
<path d="M40 104L38 122L80 118L86 92L74 100Z" fill="#9c9c9c"/>
<path d="M15.400 50Q14 36 20 28L46 21L58 17L72 24Q80 36 82.100 56L82.100 66.200L80.300 83.100L75 100Q70 110 64 114.500Q56 119.500 49 119Q42 118 37 114Q30 108 25.500 100Q20 90 17.500 80L15.600 66Z" fill="url(#t0fc)"/>
<path d="M15 66Q18 88 30 106Q40 117 50 119.500Q40 112 31 98Q23 84 20 64Z" fill="#8c8c8c" opacity="0.55" filter="url(#t0b2)"/>
<ellipse cx="27" cy="60" rx="8.500" ry="4.200" fill="#6e6e6e" opacity="0.7" filter="url(#t0b2)"/>
<ellipse cx="60" cy="60" rx="9.500" ry="4.200" fill="#6e6e6e" opacity="0.7" filter="url(#t0b2)"/>
<path d="M52 104Q64 102 72 90Q70 104 60 113Q54 118 48 118Z" fill="#808080" opacity="0.6" filter="url(#t0b2)"/>
<path d="M12.600 19.200Q18 9 27.600 6Q33 2.500 38.900 3.200Q47 3 55.800 7Q66 7 72.700 11.700Q81 15 84 22.900Q88.500 31 87.800 41.700Q87.500 50 85.900 56.800L82.100 66L81.200 64.300L78.400 56.800L76.500 43.600Q76 37 74.600 32.300Q72 26 69 22.900Q63 19 57.700 18.200Q52 21 46.400 22.900Q36 23 27.600 24.800Q21 27 17.300 30.500Q15 37 14.500 43.600L14.500 52L13.500 56.800Q11.500 50 11.700 41.700Q11.500 29 12.600 19.200Z" fill="#161616"/>
<path d="M28 9Q36 4.500 44 7Q50 9 54 8Q48 12 40 11.500Q33 12 28 15Z" fill="#7a7a7a" opacity="0.75"/>
<path d="M60 10Q68 12 72 18" stroke="#4a4a4a" stroke-width="1.200" fill="none"/>
<path d="M18.500 57Q24 52 30 53.500L36 55.500L35.500 58Q27 55.500 18.500 59.500Z" fill="#262626"/>
<path d="M49 56Q58 52 66 54L71 56.500L70.500 59Q60 55.500 49.500 59Z" fill="#262626"/>
<path d="M22 61.500Q27 59.500 33 61.500Q27 63.800 22 61.500Z" fill="#3a3a3a"/>
<path d="M53 61.500Q59 59.300 65.500 61.500Q59 64 53 61.500Z" fill="#3a3a3a"/>
<path d="M44 60Q42 72 37.500 78" stroke="#b0b0b0" stroke-width="2.200" fill="none"/>
<path d="M35.500 79Q40 82.500 48.500 80L47.500 83Q41 84.500 36 81.500Z" fill="#4c4c4c"/>
<path d="M33.500 92Q45 89.500 58 92L57 94.200Q45 93.500 34.500 94.200Z" fill="#505050"/>
<path d="M37 99Q45 101.500 54 99" stroke="#a8a8a8" stroke-width="1.600" fill="none"/>
<path d="M35.200 112L50 128L86 97L92 142H34Z" fill="#f0f0f0"/>
<path d="M35.200 110L34.200 142H45L50 128Z" fill="#e6e6e6"/>
<path d="M50 128L70 110L76 104" stroke="#c4c4c4" stroke-width="1.200" fill="none"/>
<path d="M43.600 124.400L58.600 124.400L59.600 130L54 142H44.500L48.300 132Z" fill="#2a2a2a"/>
<path d="M47 128.500L57 127M46.500 136L55.500 134.500" stroke="#9a9a9a" stroke-width="1.100"/>
<path d="M-2 119.500L16.400 112.200L35.200 109.400L34.200 120L40 144H-2Z" fill="#1a1a1a"/>
<path d="M84 92.500L103 109V144H66L80 112Z" fill="#1a1a1a"/>
<path d="M0 124Q14 116 30 114" stroke="#3a3a3a" stroke-width="1.500" fill="none"/>
</g>
</g></svg></div><span class="n b" style="left:30.85px;top:2px;font-size:17.5px;letter-spacing:0.79px;">1progs.ru, 1progs.ru</span><span class="d b" style="left:31.2px;top:23px;font-size:12px;letter-spacing:0.3px;word-spacing:1.15px;">1929 - (2005)</span></div>
<div class="box f" style="left:350px;top:460px"><div class="th"><svg width="26" height="33" viewBox="0 0 26 33"><defs><filter id="ph1b" x="-20%" y="-20%" width="140%" height="140%"><feGaussianBlur stdDeviation="0.55"/></filter><clipPath id="ph1c"><rect width="26" height="33"/></clipPath></defs>
<g clip-path="url(#ph1c)"><rect width="26" height="33" fill="#9a9a9a"/>
<g filter="url(#ph1b)">
<path d="M-1 33V26Q4 21 9 21.500L13 24L17.500 21.500Q23 22 27 27V33Z" fill="#7c7c7c"/>
<path d="M9.500 24L12.500 31L16 24L13 26Z" fill="#e6e6e6"/>
<path d="M9.500 20H16V25L12.800 27L9.500 25Z" fill="#bdbdbd"/>
<ellipse cx="12.800" cy="16" rx="5" ry="6.600" fill="#d2d2d2"/>
<path d="M5.500 17Q3.500 9 6.500 4.500Q9.500 0.500 13.500 0.800Q18 1 20 5Q22 9.500 19.800 17Q19.300 13.500 17.500 11.500Q14 12.500 10.500 11.500Q8 12 7.500 14.500Q7 18 6.500 19Z" fill="#121212"/>
<path d="M9 15.500h2.600M14.300 15.500h2.600" stroke="#2c2c2c" stroke-width="1"/>
<path d="M11 20.500h3.400" stroke="#6a6a6a" stroke-width="0.800"/>
<path d="M12.600 16.500V18.800" stroke="#a8a8a8" stroke-width="0.700"/>
</g></g></svg></div><span class="n" style="left:31.1px;top:2px;font-size:17.5px;letter-spacing:0.64px;">Willner, Regina Martha K.</span><span class="d" style="left:31.2px;top:23px;font-size:12px;letter-spacing:0px;word-spacing:2.5px;">1931</span></div>
<div class="box m" style="left:501px;top:273px"><div class="th"><svg width="26" height="33" viewBox="0 0 26 33"><defs><filter id="ph2b" x="-20%" y="-20%" width="140%" height="140%"><feGaussianBlur stdDeviation="0.55"/></filter><filter id="ph2bb" x="-30%" y="-30%" width="160%" height="160%"><feGaussianBlur stdDeviation="1.2"/></filter><clipPath id="ph2c"><rect width="26" height="33"/></clipPath><linearGradient id="ph2f" x1="0" y1="0" x2="1" y2="0"><stop offset="0" stop-color="#ece8e4"/><stop offset="0.35" stop-color="#b8b0a8"/><stop offset="0.7" stop-color="#6c645e"/><stop offset="1" stop-color="#857d76"/></linearGradient></defs>
<g clip-path="url(#ph2c)"><rect width="26" height="33" fill="#f4f3f1"/>
<g filter="url(#ph2b)">
<path d="M4 33L7 26.500L11 22.500L13 24.500L18 18.500L23 24L24.500 33Z" fill="#d9d7d3"/>
<path d="M4.400 33L10.600 23L11.800 25L8.800 33Z" fill="#8d857d"/>
<path d="M10.800 23.500L12.500 33H15L16.500 21Z" fill="#f6f6f6"/>
<path d="M9.200 12Q9 8 12 7.500L17.500 8Q18.800 12 18 16Q17 20.500 14 21.500Q11 21 9.800 17Z" fill="url(#ph2f)"/>
<path d="M10.800 9Q10.800 4.200 14 3.200Q18.400 3 18.600 9.800Q16.500 8.300 13.800 8.600Q12 8.600 10.800 9Z" fill="#6a645f" opacity="0.9"/>
<ellipse cx="9.600" cy="11.800" rx="1.200" ry="0.800" fill="#4a4642"/>
<path d="M10 17.600h2.600" stroke="#8a827c" stroke-width="0.700"/></g></g></svg></div><span class="n" style="left:29.95px;top:2px;font-size:17.5px;letter-spacing:0.69px;">Beckman, Robert Martin</span><span class="d" style="left:30.95px;top:23px;font-size:12px;letter-spacing:0.05px;word-spacing:2.05px;">1890 - 1964</span></div>
<div class="box f" style="left:501px;top:592px"><div class="th"><svg width="26" height="33" viewBox="0 0 26 33"><defs><filter id="ph3b" x="-20%" y="-20%" width="140%" height="140%"><feGaussianBlur stdDeviation="0.5"/></filter><filter id="ph3bb" x="-30%" y="-30%" width="160%" height="160%"><feGaussianBlur stdDeviation="1.2"/></filter><clipPath id="ph3c"><rect width="26" height="33"/></clipPath></defs>
<g clip-path="url(#ph3c)"><rect width="26" height="33" fill="#fdfcfb"/>
<g filter="url(#ph3b)">
<path d="M3.900 17.200Q8 16 10 16.800L13 24L17.500 16.200Q20.500 15.800 22 16.600Q22.500 23 18 27.500Q14 31 12.800 29.500Q6 27 3.900 17.200Z" fill="#1c1714"/>
<path d="M11.400 16L13.200 24.500L17 15.800Q14 14.500 11.400 16Z" fill="#efeae4"/>
<path d="M9 11L13.200 10.600L13.600 16L9.400 15.800Z" fill="#2a2420"/>
<path d="M8.300 10.500Q7.800 3.500 13 2.900Q18.400 3 18.200 10.600Q17 11.500 13 11Q9.500 11.800 8.300 10.500Z" fill="#221c18"/>
<path d="M13.300 6Q16 5 17 6.500L16.800 9.300Q15 9.800 13.300 9Z" fill="#f4efe9"/>
<path d="M13.500 9.500L16.500 9.500L15.500 12.500L13.500 13Z" fill="#8a7e74"/></g></g></svg></div><span class="n" style="left:30.3px;top:2px;font-size:17.5px;letter-spacing:0.47px;">Cook, Josephine</span><span class="d" style="left:30.95px;top:23px;font-size:12px;letter-spacing:0.05px;word-spacing:2.05px;">1897 - 1971</span></div>
<div class="box m" style="left:684px;top:193px"><div class="th"><svg width="26" height="33" viewBox="0 0 26 33"><defs><filter id="ph4b" x="-20%" y="-20%" width="140%" height="140%"><feGaussianBlur stdDeviation="0.55"/></filter><filter id="ph4bb" x="-30%" y="-30%" width="160%" height="160%"><feGaussianBlur stdDeviation="1.2"/></filter><clipPath id="ph4c"><rect width="26" height="33"/></clipPath></defs>
<g clip-path="url(#ph4c)"><rect width="26" height="33" fill="#ecdcc9"/>
<g filter="url(#ph4b)">
<path d="M0 33V27Q4 24.500 9 23.800L17.500 23.800Q22 24.500 26 27V33Z" fill="#9a7048"/>
<path d="M10 24L11.500 33H15.500L18.500 24Z" fill="#f0e2d0"/>
<path d="M12.800 27.500L14.800 27.500L14.300 33H13Z" fill="#8a6440"/>
<ellipse cx="13.500" cy="16.500" rx="5.600" ry="5" fill="#a27e5c"/>
<path d="M8.800 18Q9 24.500 13.500 25.500Q18 24.500 18.400 18Q16 20 13.500 19.600Q11 20 8.800 18Z" fill="#f2e8dc"/>
<path d="M4.400 12.800Q13 10.500 22 12.600L21.600 14.400Q13 12.600 5 14.600Z" fill="#7a5632"/>
<path d="M7.200 12.600Q6.500 4 13 3.400Q19.800 3.800 19.400 12.500Q13 11 7.200 12.600Z" fill="#8a6440"/></g></g></svg></div><span class="n" style="left:30.4px;top:2px;font-size:17.5px;letter-spacing:0.55px;">Beckman, Johann Friedrich</span><span class="d" style="left:31.2px;top:23px;font-size:12px;letter-spacing:0.05px;word-spacing:2.05px;">1864 - 1935</span></div>
<div class="box f" style="left:684px;top:353px"><div class="th"><svg width="26" height="33" viewBox="0 0 26 33"><rect width="26" height="33" fill="#FCE0E1"/><path d="M10.100 2.900H22.600L23.100 10.600L24.700 15.300L23.100 16.400L22.600 22H19.500L16.400 24.700L15.300 28.800L9.100 24.200L11.200 29.900L7.500 31.400L4.400 30.900L1.300 26.200L3.900 18.400Q4 11 5.500 8Q7 4 10.100 2.900Z" fill="#F6C2CD"/><path d="M22.600 4.500L23.100 10.600L24.700 15.300L23.100 16.400L22.600 22H19.500L16.400 24.700L15.300 28.800L9.100 24.200L11.200 29.900L7.500 31.400L4.400 30.900" fill="none" stroke="#6a4a54" stroke-width="0.7" stroke-dasharray="1.600 2.200"/></svg></div><span class="n" style="left:30.4px;top:2px;font-size:17.5px;letter-spacing:0.53px;">Kowalski, Sophie</span><span class="d" style="left:31.2px;top:23px;font-size:12px;letter-spacing:0.05px;word-spacing:2.5px;">1864 - 1946</span></div>
<div class="box m" style="left:684px;top:512px"><div class="th"><svg width="26" height="33" viewBox="0 0 26 33"><rect width="26" height="33" fill="#DDDDFF"/><path d="M7 2.900H20Q21.300 3.600 21.500 5.500L22 14.300L23.400 16.900L22 21V24.400H16.900L14.300 26.200L13.200 31.400L2.900 23.600L3.800 21.500L3.400 20V6.500Q4.300 3.400 7 2.900Z" fill="#C4C4FB"/><path d="M21.500 5.500L22 14.300L23.400 16.900L22 21V24.400H16.900L14.300 26.200L13.200 31.400L2.900 23.600" fill="none" stroke="#5c587c" stroke-width="0.7" stroke-dasharray="1.600 2"/></svg></div><span class="n" style="left:30.75px;top:2px;font-size:17.5px;letter-spacing:0.52px;">Cook, Eberhard</span><span class="d" style="left:31.2px;top:23px;font-size:12px;letter-spacing:0.05px;word-spacing:2.5px;">1867 - 1916</span></div>
<div class="box f" style="left:684px;top:672px"><div class="th"><svg width="26" height="33" viewBox="0 0 26 33"><rect width="26" height="33" fill="#FCE0E1"/><path d="M10.100 2.900H22.600L23.100 10.600L24.700 15.300L23.100 16.400L22.600 22H19.500L16.400 24.700L15.300 28.800L9.100 24.200L11.200 29.900L7.500 31.400L4.400 30.900L1.300 26.200L3.900 18.400Q4 11 5.500 8Q7 4 10.100 2.900Z" fill="#F6C2CD"/><path d="M22.600 4.500L23.100 10.600L24.700 15.300L23.100 16.400L22.600 22H19.500L16.400 24.700L15.300 28.800L9.100 24.200L11.200 29.900L7.500 31.400L4.400 30.900" fill="none" stroke="#6a4a54" stroke-width="0.7" stroke-dasharray="1.600 2.200"/></svg></div><span class="n" style="left:30.4px;top:2px;font-size:17.5px;letter-spacing:0.39px;">Frankikeit, Emma</span><span class="d" style="left:31.2px;top:23px;font-size:12px;letter-spacing:0.05px;word-spacing:2.05px;">1869 - 1922</span></div>
<div class="box m" style="left:986px;top:153px"><div class="th"><svg width="26" height="33" viewBox="0 0 26 33"><defs><filter id="ph5b" x="-20%" y="-20%" width="140%" height="140%"><feGaussianBlur stdDeviation="0.55"/></filter><filter id="ph5bb" x="-30%" y="-30%" width="160%" height="160%"><feGaussianBlur stdDeviation="1.2"/></filter><clipPath id="ph5c"><rect width="26" height="33"/></clipPath><radialGradient id="ph5g" cx="0.5" cy="0.5" r="0.72"><stop offset="0" stop-color="#a4a4a4"/><stop offset="0.75" stop-color="#8c8e90"/><stop offset="1" stop-color="#8fa0b4"/></radialGradient></defs>
<g clip-path="url(#ph5c)"><rect width="26" height="33" fill="#90a0b2"/>
<g filter="url(#ph5b)">
<rect width="26" height="33" fill="url(#ph5g)"/>
<path d="M0.500 31V24Q4 19.500 9 18.200L9.500 31Z" fill="#3c3c3c"/>
<path d="M16.400 18.200Q22 19.500 25.300 24V31H16Z" fill="#6a6a6a"/>
<path d="M9 18L16.400 18L16 27L12.800 32.500L9.800 27Z" fill="#e4e4e4"/>
<path d="M10 19.800L12.800 20.600L15.800 19.800L15.800 21.600L12.800 20.900L10 21.600Z" fill="#1c1c1c"/>
<ellipse cx="14.300" cy="11" rx="4.700" ry="6.200" fill="#bcbcbc"/>
<path d="M7.200 10Q6.500 4.500 9.500 4L11.500 3.500Q16 3 18 5Q14 5 11 6.200Q10.500 9 10.200 11Q8 11.500 7.200 10Z" fill="#1e1e1e"/>
<path d="M11.800 9.800h2.200M15.600 9.800h2" stroke="#555" stroke-width="0.800"/>
<path d="M16 11V13.200" stroke="#8a8a8a" stroke-width="0.800"/>
<path d="M13.200 15h3" stroke="#777" stroke-width="0.600"/></g></g></svg></div><span class="n" style="left:30.4px;top:2px;font-size:17.5px;letter-spacing:0.55px;">Beckman, Kurt Friedrich</span><span class="d" style="left:31.2px;top:23px;font-size:12px;letter-spacing:0.05px;word-spacing:2.05px;">1829 - 1869</span></div>
<div class="box f" style="left:986px;top:233px"><div class="th"><svg width="26" height="33" viewBox="0 0 26 33"><rect width="26" height="33" fill="#FCE0E1"/><path d="M10.100 2.900H22.600L23.100 10.600L24.700 15.300L23.100 16.400L22.600 22H19.500L16.400 24.700L15.300 28.800L9.100 24.200L11.200 29.900L7.500 31.400L4.400 30.900L1.300 26.200L3.900 18.400Q4 11 5.500 8Q7 4 10.100 2.900Z" fill="#F6C2CD"/><path d="M22.600 4.500L23.100 10.600L24.700 15.300L23.100 16.400L22.600 22H19.500L16.400 24.700L15.300 28.800L9.100 24.200L11.200 29.900L7.500 31.400L4.400 30.900" fill="none" stroke="#6a4a54" stroke-width="0.7" stroke-dasharray="1.600 2.200"/></svg></div><span class="n" style="left:30.3px;top:2px;font-size:17.5px;letter-spacing:0.7px;">Schmidt, Caroline</span><span class="d" style="left:30.7px;top:23px;font-size:12px;letter-spacing:0.05px;word-spacing:0.25px;">... - ...</span></div>
<div class="box m" style="left:986px;top:313px"><div class="th"><svg width="26" height="33" viewBox="0 0 26 33"><rect width="26" height="33" fill="#DDDDFF"/><path d="M7 2.900H20Q21.300 3.600 21.500 5.500L22 14.300L23.400 16.900L22 21V24.400H16.900L14.300 26.200L13.200 31.400L2.900 23.600L3.800 21.500L3.400 20V6.500Q4.300 3.400 7 2.900Z" fill="#C4C4FB"/><path d="M21.500 5.500L22 14.300L23.400 16.900L22 21V24.400H16.900L14.300 26.200L13.200 31.400L2.900 23.600" fill="none" stroke="#5c587c" stroke-width="0.7" stroke-dasharray="1.600 2"/></svg></div><span class="n" style="left:30.3px;top:2px;font-size:17.5px;letter-spacing:0.78px;">Kowalski, Martin</span><span class="d" style="left:30.7px;top:23px;font-size:12px;letter-spacing:0.05px;word-spacing:1.6px;">(1843) - ...</span></div>
<div class="box f" style="left:986px;top:393px"><div class="th"><svg width="26" height="33" viewBox="0 0 26 33"><rect width="26" height="33" fill="#FCE0E1"/><path d="M10.100 2.900H22.600L23.100 10.600L24.700 15.300L23.100 16.400L22.600 22H19.500L16.400 24.700L15.300 28.800L9.100 24.200L11.200 29.900L7.500 31.400L4.400 30.900L1.300 26.200L3.900 18.400Q4 11 5.500 8Q7 4 10.100 2.900Z" fill="#F6C2CD"/><path d="M22.600 4.500L23.100 10.600L24.700 15.300L23.100 16.400L22.600 22H19.500L16.400 24.700L15.300 28.800L9.100 24.200L11.200 29.900L7.500 31.400L4.400 30.900" fill="none" stroke="#6a4a54" stroke-width="0.7" stroke-dasharray="1.600 2.200"/></svg></div><span class="n" style="left:30.3px;top:2px;font-size:17.5px;letter-spacing:0.52px;">Esser, Dorothe</span><span class="d" style="left:30.7px;top:23px;font-size:12px;letter-spacing:0.05px;word-spacing:0.25px;">... - ...</span></div>
<div class="box m" style="left:986px;top:472px"><div class="th"><svg width="26" height="33" viewBox="0 0 26 33"><rect width="26" height="33" fill="#DDDDFF"/><path d="M7 2.900H20Q21.300 3.600 21.500 5.500L22 14.300L23.400 16.900L22 21V24.400H16.900L14.300 26.200L13.200 31.400L2.900 23.600L3.800 21.500L3.400 20V6.500Q4.300 3.400 7 2.900Z" fill="#C4C4FB"/><path d="M21.500 5.500L22 14.300L23.400 16.900L22 21V24.400H16.900L14.300 26.200L13.200 31.400L2.900 23.600" fill="none" stroke="#5c587c" stroke-width="0.7" stroke-dasharray="1.600 2"/></svg></div><span class="n" style="left:30.3px;top:2px;font-size:17.5px;letter-spacing:0.54px;">Cook, Frank Herbert</span><span class="d" style="left:30.7px;top:23px;font-size:12px;letter-spacing:0.05px;word-spacing:0.25px;">... - ...</span></div>
<div class="box f" style="left:986px;top:552px"><div class="th"><svg width="26" height="33" viewBox="0 0 26 33"><rect width="26" height="33" fill="#FCE0E1"/><path d="M10.100 2.900H22.600L23.100 10.600L24.700 15.300L23.100 16.400L22.600 22H19.500L16.400 24.700L15.300 28.800L9.100 24.200L11.200 29.900L7.500 31.400L4.400 30.900L1.300 26.200L3.900 18.400Q4 11 5.500 8Q7 4 10.100 2.900Z" fill="#F6C2CD"/><path d="M22.600 4.500L23.100 10.600L24.700 15.300L23.100 16.400L22.600 22H19.500L16.400 24.700L15.300 28.800L9.100 24.200L11.200 29.900L7.500 31.400L4.400 30.900" fill="none" stroke="#6a4a54" stroke-width="0.7" stroke-dasharray="1.600 2.200"/></svg></div><span class="n" style="left:30.3px;top:2px;font-size:17.5px;letter-spacing:0.91px;">Dillborn, Brunhilde M.</span><span class="d" style="left:30.7px;top:23px;font-size:12px;letter-spacing:0.05px;word-spacing:0.25px;">... - ...</span></div>
<div class="box m" style="left:986px;top:632px"><div class="th"><svg width="26" height="33" viewBox="0 0 26 33"><rect width="26" height="33" fill="#DDDDFF"/><path d="M7 2.900H20Q21.300 3.600 21.500 5.500L22 14.300L23.400 16.900L22 21V24.400H16.900L14.300 26.200L13.200 31.400L2.900 23.600L3.800 21.500L3.400 20V6.500Q4.300 3.400 7 2.900Z" fill="#C4C4FB"/><path d="M21.500 5.500L22 14.300L23.400 16.900L22 21V24.400H16.900L14.300 26.200L13.200 31.400L2.900 23.600" fill="none" stroke="#5c587c" stroke-width="0.7" stroke-dasharray="1.600 2"/></svg></div><span class="n" style="left:30.4px;top:2px;font-size:17.5px;letter-spacing:0.54px;">Frankikeit, Ludwig K.</span><span class="d" style="left:30.7px;top:23px;font-size:12px;letter-spacing:0.05px;word-spacing:0.25px;">... - ...</span></div>
<div class="box f" style="left:986px;top:712px"><div class="th"><svg width="26" height="33" viewBox="0 0 26 33"><rect width="26" height="33" fill="#FCE0E1"/><path d="M10.100 2.900H22.600L23.100 10.600L24.700 15.300L23.100 16.400L22.600 22H19.500L16.400 24.700L15.300 28.800L9.100 24.200L11.200 29.900L7.500 31.400L4.400 30.900L1.300 26.200L3.900 18.400Q4 11 5.500 8Q7 4 10.100 2.900Z" fill="#F6C2CD"/><path d="M22.600 4.500L23.100 10.600L24.700 15.300L23.100 16.400L22.600 22H19.500L16.400 24.700L15.300 28.800L9.100 24.200L11.200 29.900L7.500 31.400L4.400 30.900" fill="none" stroke="#6a4a54" stroke-width="0.7" stroke-dasharray="1.600 2.200"/></svg></div><span class="n" style="left:30.4px;top:2px;font-size:17.5px;letter-spacing:0.59px;">Bremer, Leonore Elisabeth</span><span class="d" style="left:30.7px;top:23px;font-size:12px;letter-spacing:0.05px;word-spacing:0.25px;">... - ...</span></div>
<div id="status"><span class="t" style="left:2.1px;top:4px;font-size:12px;letter-spacing:-0.08px;">59 персон(ы)</span><i style="left:119px"></i><i style="left:299px"></i><i style="left:539px"></i><i style="left:739px"></i><i style="left:1270px"></i></div>
</body></html>
